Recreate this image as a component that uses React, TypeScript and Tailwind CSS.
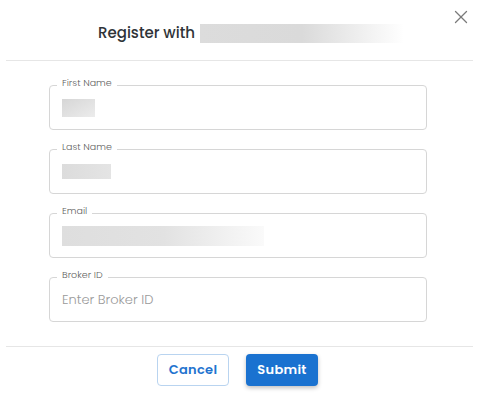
import { X } from "lucide-react";

const font = { fontFamily: "Poppins, 'Open Sans', 'Liberation Sans', sans-serif" };

type FieldProps = {
  label: string;
  children: React.ReactNode;
};

const Field = ({ label, children }: FieldProps) => {
  return (
    <div className="relative h-[45px] rounded-[4px] border border-[#d6d6d6] flex items-center pl-[12px]">
      <span className="absolute -top-[10px] left-[7px] bg-white px-[5px] text-[9.5px] leading-[14px] font-light text-[#5f5f5f]">
        {label}
      </span>
      {children}
    </div>
  );
};

// blurred value stand-in
const Blur = ({ className }: { className: string }) => (
  <div className={className} />
);

export default function App() {
  return (
    <div className="w-[479px] h-[400px] bg-white overflow-hidden" style={font}>
      <div className="relative h-[60px] flex items-center pl-[98px] pt-[6px]">
        <h2 className="text-[15px] font-medium text-[#2f3438]">Register with</h2>
        <Blur className="ml-[5px] h-[19px] w-[204px] bg-gradient-to-r from-[#dcdcdc] via-[#dadada] to-[#ffffff]" />
        <button className="absolute right-[7px] top-[6px] text-[#7a7a7a]">
          <X size={22} strokeWidth={1.4} />
        </button>
      </div>
      <div className="mx-[6px] h-px bg-[#e6e6e6]" />

      <div className="flex flex-col gap-[19px] pl-[49px] pr-[52px] pt-[24px]">
        <Field label="First Name">
          <Blur className="h-[18px] w-[33px] bg-gradient-to-br from-[#d6d6d6] to-[#ececec]" />
        </Field>
        <Field label="Last Name">
          <Blur className="h-[15px] w-[49px] bg-gradient-to-r from-[#dcdcdc] to-[#e4e4e4]" />
        </Field>
        <Field label="Email">
          <Blur className="h-[20px] w-[202px] bg-gradient-to-r from-[#dedede] via-[#e2e2e2] to-[#fafafa]" />
        </Field>
        <Field label="Broker ID">
          <input
            className="w-full bg-transparent text-[13px] font-light text-[#444] placeholder:text-[#9a9a9a] focus:outline-none"
            placeholder="Enter Broker ID"
          />
        </Field>
      </div>

      <div className="mx-[6px] mt-[24px] h-px bg-[#e6e6e6]" />

      <div className="flex gap-[17px] pl-[157px] pt-[7px]">
        <button className="h-[32px] w-[72px] rounded-[4px] border border-[#b9d4f0] text-[13px] font-semibold text-[#1f74cf] tracking-[0.3px]">
          Cancel
        </button>
        <button className="h-[32px] w-[72px] rounded-[4px] bg-[#1a72d0] text-[13px] font-semibold text-white tracking-[0.3px] shadow-[0_2px_4px_rgba(0,0,0,0.25)]">
          Submit
        </button>
      </div>
    </div>
  );
}
